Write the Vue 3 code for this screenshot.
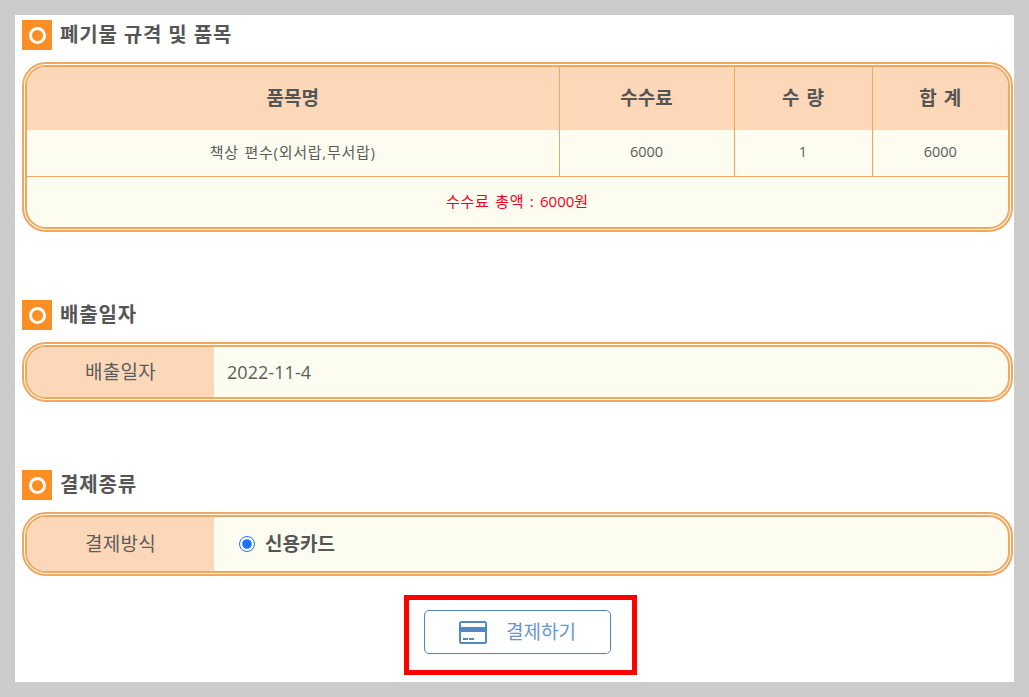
<script setup>
const rows = [{ name: '책상 편수(외서랍,무서랍)', fee: 6000, qty: 1, sum: 6000 }]
</script>

<template>
  <div class="page">
    <main class="panel">
      <section class="sec first">
        <h2 class="head"><span class="bullet"></span><span class="title">폐기물 규격 및 품목</span></h2>
        <div class="box">
          <table class="tbl">
            <colgroup>
              <col class="c1" /><col class="c2" /><col class="c3" /><col />
            </colgroup>
            <thead>
              <tr>
                <th>품목명</th><th>수수료</th><th>수 량</th><th>합 계</th>
              </tr>
            </thead>
            <tbody>
              <tr v-for="r in rows" :key="r.name">
                <td class="name">{{ r.name }}</td><td>{{ r.fee }}</td><td>{{ r.qty }}</td><td>{{ r.sum }}</td>
              </tr>
              <tr>
                <td colspan="4" class="total">수수료 총액 : <span class="num">6000</span>원</td>
              </tr>
            </tbody>
          </table>
        </div>
      </section>

      <section class="sec">
        <h2 class="head"><span class="bullet"></span><span class="title">배출일자</span></h2>
        <div class="box line date">
          <div class="label">배출일자</div>
          <div class="value">2022-11-4</div>
        </div>
      </section>

      <section class="sec">
        <h2 class="head"><span class="bullet"></span><span class="title">결제종류</span></h2>
        <div class="box line pay">
          <div class="label">결제방식</div>
          <label class="value option">
            <input type="radio" name="pay" checked />
            <b>신용카드</b>
          </label>
        </div>
      </section>

      <div class="actions">
        <button class="paybtn" type="button">
          <svg width="28" height="23" viewBox="0 0 28 23" aria-hidden="true">
            <rect x="0" y="0" width="28" height="23" rx="2.5" fill="#5289c4" />
            <rect x="2" y="2" width="24" height="4" fill="#fff" />
            <rect x="2" y="11" width="24" height="10" fill="#fff" />
            <rect x="4" y="17" width="5" height="2" fill="#5289c4" />
            <rect x="10" y="17" width="5" height="2" fill="#5289c4" />
          </svg>
          <span class="btext">결제하기</span>
        </button>
        <div class="mark"></div>
      </div>
    </main>
  </div>
</template>

<style>
html, body { margin: 0; background: #cccccc; }
</style>

<style scoped>
.page {
  padding: 15px;
  font-family: "Open Sans", "Noto Sans CJK KR", sans-serif;
  color: #5c5c5c;
}
.panel {
  background: #fff;
  padding: 5px 1px 28px 7px;
}
.sec { margin-top: 68px; }
.sec.first { margin-top: 0; }
.head {
  display: flex;
  align-items: center;
  gap: 8px;
  height: 30px;
  margin: 0 0 12px;
  font-size: 20px;
  font-weight: 700;
  letter-spacing: 0.85px;
  color: #555;
}
.title { padding-bottom: 4px; }
.bullet {
  width: 30px;
  height: 30px;
  background: #fb8f26;
  display: flex;
  align-items: center;
  justify-content: center;
}
.bullet::after {
  content: "";
  width: 11px;
  height: 11px;
  border: 3px solid #fff;
  border-radius: 50%;
}
.box {
  border: 5px double #f0a860;
  border-radius: 24px;
  overflow: hidden;
  background: #fdfcf0;
}
.tbl {
  width: 100%;
  table-layout: fixed;
  border-collapse: collapse;
}
.c1 { width: 532px; }
.c2 { width: 175px; }
.c3 { width: 138px; }
th {
  height: 63px;
  padding: 0 0 3px;
  box-sizing: border-box;
  background: #fcd8b8;
  color: #555;
  font-size: 19px;
  font-weight: 700;
  word-spacing: 2px;
  border-left: 1px solid #f0a860;
}
td {
  height: 46px;
  padding: 0 0 3px;
  box-sizing: border-box;
  text-align: center;
  font-size: 14.5px;
  border-left: 1px solid #f0a860;
  border-bottom: 1px solid #f0a860;
}
th:first-child, td:first-child { border-left: 0; }
td.name {
  font-size: 15px;
  letter-spacing: 0.75px;
  word-spacing: 1px;
}
td.total {
  height: 51px;
  padding-bottom: 2px;
  border-bottom: 0;
  font-size: 15px;
  letter-spacing: 0.7px;
  word-spacing: 1px;
  color: #f00020;
}
.num { letter-spacing: 0; }
.line { display: flex; align-items: stretch; }
.date { height: 50px; }
.pay { height: 54px; }
.label {
  width: 187px;
  background: #fcd8b8;
  font-size: 19px;
  letter-spacing: 0.3px;
  padding-bottom: 3px;
  box-sizing: border-box;
  display: flex;
  align-items: center;
  justify-content: center;
}
.value {
  flex: 1;
  display: flex;
  align-items: center;
  padding-left: 13px;
  font-size: 18px;
  letter-spacing: 0.05px;
}
.option { padding-left: 25px; gap: 10px; }
.option input {
  margin: 0;
  width: 16px;
  height: 16px;
  accent-color: #1a73ff;
}
.option b { font-weight: 700; font-size: 19px; padding-bottom: 2px; color: #555; }
.actions {
  position: relative;
  display: flex;
  justify-content: center;
  margin-top: 34px;
}
.paybtn {
  display: flex;
  align-items: center;
  justify-content: center;
  gap: 19px;
  width: 187px;
  height: 44px;
  padding: 0;
  background: #fff;
  border: 1px solid #4a86c0;
  border-radius: 5px;
  font: inherit;
  font-size: 19px;
  color: #6a94cc;
}
.btext { padding-bottom: 2px; }
.mark {
  position: absolute;
  left: 382px;
  top: -15px;
  width: 223px;
  height: 70px;
  border: 5px solid #ff0000;
}
</style>
